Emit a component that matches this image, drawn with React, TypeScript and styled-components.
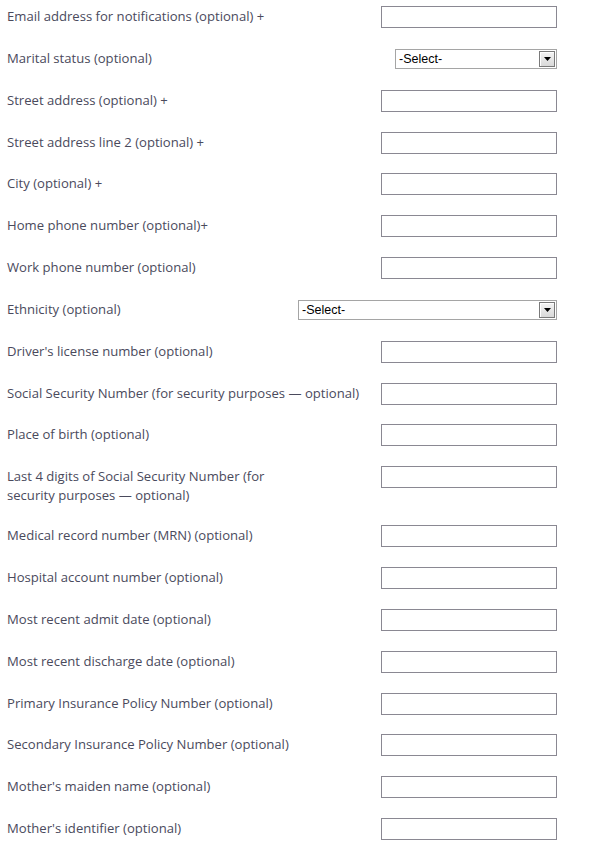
import React from "react";
import styled, { createGlobalStyle } from "styled-components";

const Global = createGlobalStyle`
  html, body { margin: 0; padding: 0; background: #ffffff; }
  body { font-family: "Open Sans", "Noto Sans", sans-serif; }
`;

const Form = styled.form`
  width: 550px;
  padding: 6px 0 0 7px;
  display: flex;
  flex-direction: column;
  gap: 19.85px;
`;

const Row = styled.div`
  display: flex;
  justify-content: space-between;
  align-items: flex-start;
  min-height: 22px;
`;

const Label = styled.label<{ $maxWidth?: number }>`
  font-family: "Open Sans", "Noto Sans", sans-serif;
  font-size: 13.1px;
  line-height: 19px;
  padding-top: 1px;
  color: #4a4a5c;
  max-width: ${(p) => (p.$maxWidth ? `${p.$maxWidth}px` : "none")};
`;

const TextInput = styled.input`
  box-sizing: border-box;
  width: 176px;
  height: 22px;
  margin: 0;
  border: 1px solid #8a8892;
  background: #fff;
  padding: 0 3px;
  font-family: "Liberation Sans", Arial, sans-serif;
  font-size: 13px;
  outline: none;
`;

const SelectBox = styled.div<{ $width: number }>`
  box-sizing: border-box;
  width: ${(p) => p.$width}px;
  height: 20px;
  margin-top: 1px;
  border: 1px solid #a5a5a5;
  background: #fff;
  display: flex;
  align-items: center;
  justify-content: space-between;
  padding: 0 1px 0 3px;
`;

const SelectText = styled.span`
  font-family: "Liberation Sans", Arial, sans-serif;
  font-size: 12.5px;
  color: #000;
  line-height: 16px;
  padding-top: 1px;
`;

const ArrowButton = styled.span`
  box-sizing: border-box;
  width: 16px;
  height: 16px;
  border: 1px solid #7a7a7a;
  background: linear-gradient(#f4f4f4, #d9d9d9);
  box-shadow: inset 1px 1px 0 #ffffff;
  display: flex;
  align-items: center;
  justify-content: center;
`;

const Arrow = () => (
  <svg width="7" height="4" viewBox="0 0 7 4">
    <polygon points="0,0 7,0 3.5,4" fill="#000" />
  </svg>
);

const Select = ({ width }: { width: number }) => (
  <SelectBox $width={width}>
    <SelectText>-Select-</SelectText>
    <ArrowButton>
      <Arrow />
    </ArrowButton>
  </SelectBox>
);

type Field = { label: string; kind: "text" | "select"; selectWidth?: number; maxWidth?: number };

const fields: Field[] = [
  { label: "Email address for notifications (optional) +", kind: "text" },
  { label: "Marital status (optional)", kind: "select", selectWidth: 162 },
  { label: "Street address (optional) +", kind: "text" },
  { label: "Street address line 2 (optional) +", kind: "text" },
  { label: "City (optional) +", kind: "text" },
  { label: "Home phone number (optional)+", kind: "text" },
  { label: "Work phone number (optional)", kind: "text" },
  { label: "Ethnicity (optional)", kind: "select", selectWidth: 259 },
  { label: "Driver's license number (optional)", kind: "text" },
  { label: "Social Security Number (for security purposes \u2014 optional)", kind: "text" },
  { label: "Place of birth (optional)", kind: "text" },
  {
    label: "Last 4 digits of Social Security Number (for security purposes \u2014 optional)",
    kind: "text",
    maxWidth: 290,
  },
  { label: "Medical record number (MRN) (optional)", kind: "text" },
  { label: "Hospital account number (optional)", kind: "text" },
  { label: "Most recent admit date (optional)", kind: "text" },
  { label: "Most recent discharge date (optional)", kind: "text" },
  { label: "Primary Insurance Policy Number (optional)", kind: "text" },
  { label: "Secondary Insurance Policy Number (optional)", kind: "text" },
  { label: "Mother's maiden name (optional)", kind: "text" },
  { label: "Mother's identifier (optional)", kind: "text" },
];

export default function App() {
  return (
    <>
      <Global />
      <Form onSubmit={(e) => e.preventDefault()}>
        {fields.map((f) => (
          <Row key={f.label}>
            <Label $maxWidth={f.maxWidth}>{f.label}</Label>
            {f.kind === "text" ? <TextInput type="text" /> : <Select width={f.selectWidth ?? 162} />}
          </Row>
        ))}
      </Form>
    </>
  );
}
